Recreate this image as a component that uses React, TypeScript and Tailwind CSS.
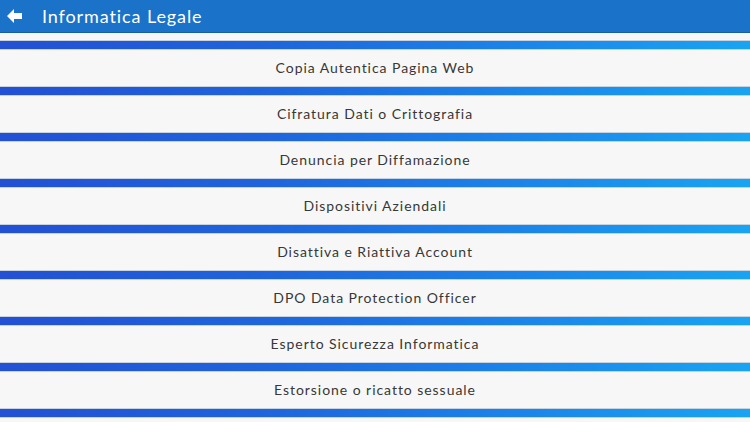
import React from "react";

const items = [
  "Copia Autentica Pagina Web",
  "Cifratura Dati o Crittografia",
  "Denuncia per Diffamazione",
  "Dispositivi Aziendali",
  "Disattiva e Riattiva Account",
  "DPO Data Protection Officer",
  "Esperto Sicurezza Informatica",
  "Estorsione o ricatto sessuale",
];

function Card({ label, h = "h-[38px]" }: { label?: string; h?: string }) {
  return (
    <div
      className={`${h} shrink-0 bg-[#f7f7f7] border-y border-[#c9d3de] flex items-center justify-center pb-[1px] text-[14px] text-[#383838] tracking-[0.95px]`}
    >
      {label}
    </div>
  );
}

export default function App() {
  return (
    <div
      className="w-[750px] h-[422px] overflow-hidden flex flex-col"
      style={{ fontFamily: '"Lato", "Noto Sans", sans-serif' }}
    >
      <div className="h-[33px] shrink-0 bg-[#1a73c9] border-b border-[#155fa8] flex items-center">
        <svg width="16" height="14" viewBox="0 0 16 14" className="ml-[7px]">
          <path d="M0 7 L7 0 L7 4 L15 4 L15 10 L7 10 L7 14 Z" fill="#ffffff" />
        </svg>
        <span className="ml-[19px] text-white text-[18px] tracking-[0.9px]">Informatica Legale</span>
      </div>
      <div className="flex-1 flex flex-col gap-[8px] bg-[linear-gradient(90deg,#2350d4_0%,#1f64dc_35%,#1c80e8_65%,#19a4f2_100%)]">
        <div className="h-[8px] shrink-0 bg-[#f7f7f7] border-b border-[#c9d3de]" />
        {items.map((t) => (
          <Card key={t} label={t} />
        ))}
        <Card h="h-[20px]" />
      </div>
    </div>
  );
}
